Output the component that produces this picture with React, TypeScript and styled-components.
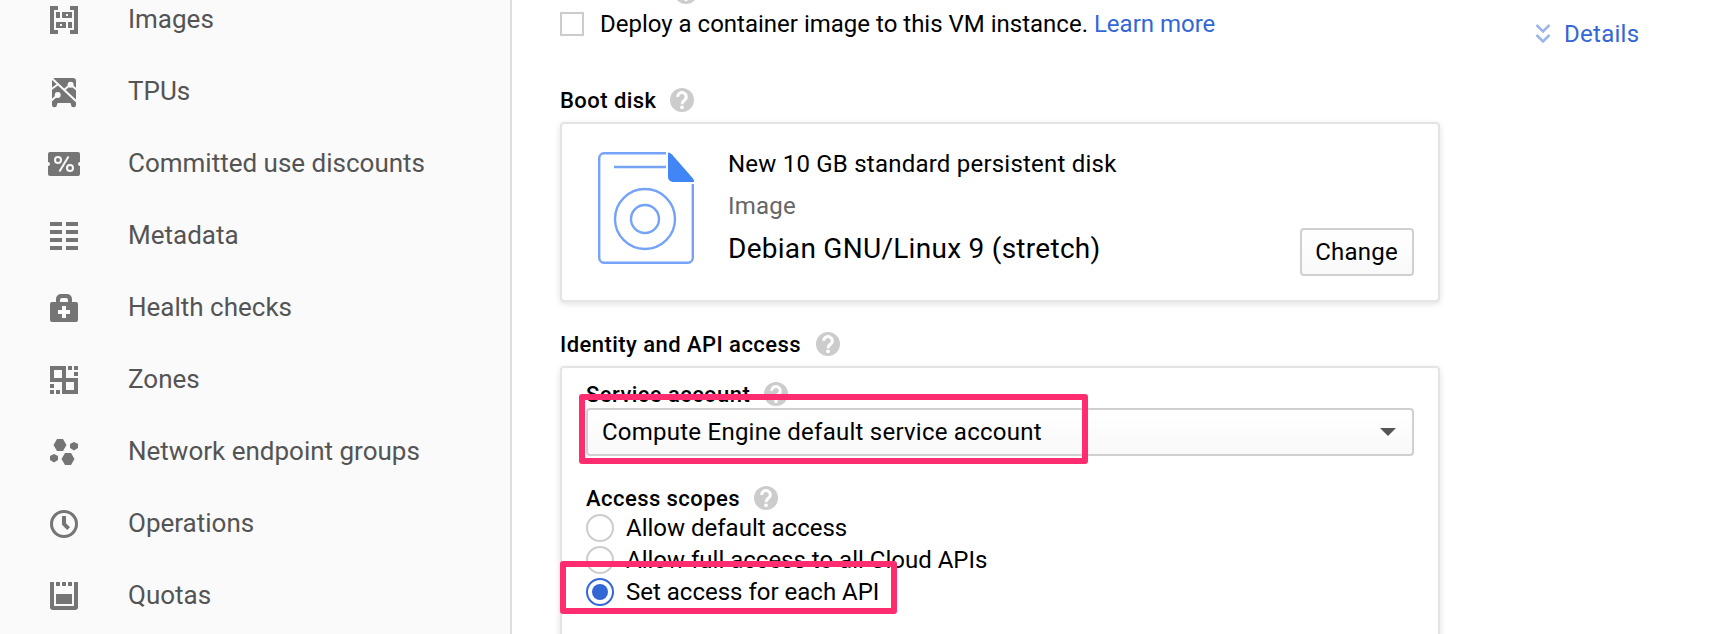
import React from 'react';
import styled, { createGlobalStyle } from 'styled-components';

const Global = createGlobalStyle`
  html, body, #root { margin: 0; padding: 0; height: 634px; overflow: hidden; }
  body { background: #fff; font-family: Roboto, "Liberation Sans", sans-serif; color: #000; }
  *, *::before, *::after { box-sizing: border-box; }
`;

const Page = styled.div`
  display: flex;
  width: 1714px;
  height: 634px;
  overflow: hidden;
`;

const Sidebar = styled.nav`
  flex: none;
  width: 512px;
  height: 634px;
  overflow: hidden;
  background: #fafafa;
  border-right: 2px solid #ddd;
`;

const NavList = styled.ul`
  list-style: none;
  margin: -16px 0 0;
  padding: 0;
`;

const NavItem = styled.li`
  display: flex;
  align-items: center;
  height: 72px;
  padding-left: 48px;
  font-size: 26px;
  line-height: 32px;
  color: #545454;
  svg { flex: none; width: 32px; height: 32px; margin-right: 48px; fill: #757575; }
`;

const NavText = styled.span`
  padding-bottom: 2px;
`;

const Main = styled.main`
  width: 880px;
  margin-left: 48px;
  flex: none;
`;

const LabelRow = styled.div<{ $top?: number }>`
  display: flex;
  align-items: center;
  height: 24px;
  margin-top: ${(p) => p.$top ?? 0}px;
`;

const LabelText = styled.span`
  padding-top: 2px;
  font-size: 22px;
  font-weight: 500;
  line-height: 24px;
  letter-spacing: 0.45px;
  white-space: nowrap;
`;

const HelpSvg = styled.svg<{ $gap: number }>`
  flex: none;
  width: 24px;
  height: 24px;
  margin-left: ${(p) => p.$gap}px;
`;

const CheckRow = styled.label`
  display: flex;
  align-items: center;
  height: 32px;
  margin-top: 4px;
  font-size: 24px;
  white-space: nowrap;
`;

const Checkbox = styled.span`
  width: 24px;
  height: 24px;
  margin-right: 16px;
  border: 2px solid #ccc;
  background: #fff;
`;

const Link = styled.a`
  color: #3367d6;
  text-decoration: none;
`;

const Card = styled.section`
  width: 880px;
  margin-top: 10px;
  border: 2px solid #e4e4e4;
  border-radius: 4px;
  background: #fff;
  box-shadow: 0 2px 6px rgba(0, 0, 0, 0.12);
`;

const DiskCard = styled(Card)`
  display: flex;
  height: 180px;
  padding: 28px 24px 24px 36px;
`;

const DiskSvg = styled.svg`
  flex: none;
  width: 96px;
  height: 112px;
`;

const DiskInfo = styled.div`
  flex: 1;
  margin-left: 34px;
  white-space: nowrap;
`;

const DiskLine = styled.div<{ $size?: number; $color?: string; $height: number; $spacing?: number }>`
  height: ${(p) => p.$height}px;
  line-height: ${(p) => p.$height}px;
  font-size: ${(p) => p.$size ?? 24}px;
  color: ${(p) => p.$color ?? '#000'};
  letter-spacing: ${(p) => p.$spacing ?? 0.22}px;
`;

const Button = styled.button`
  align-self: flex-end;
  width: 114px;
  height: 48px;
  padding: 0 1px 0 0;
  border: 2px solid #d0d0d0;
  border-radius: 4px;
  background: linear-gradient(#fff, #f9f9f9);
  font: 24px/44px Roboto, "Liberation Sans", sans-serif;
  letter-spacing: 0.22px;
  color: #000;
`;

const AccessCard = styled(Card)`
  height: 320px;
  padding: 14px 24px;
`;

const Select = styled.div`
  display: flex;
  align-items: center;
  justify-content: space-between;
  height: 48px;
  margin-top: 2px;
  padding: 0 16px 0 14px;
  border: 2px solid #d0d0d0;
  border-radius: 4px;
  background: linear-gradient(#fff, #f9f9f9);
  font-size: 24px;
  letter-spacing: 0.24px;
  white-space: nowrap;
`;

const RadioGroup = styled.div`
  margin-top: 2px;
`;

const RadioRow = styled.label`
  display: flex;
  align-items: center;
  height: 32px;
  font-size: 24px;
  white-space: nowrap;
`;

const Radio = styled.span<{ $on?: boolean }>`
  display: flex;
  align-items: center;
  justify-content: center;
  width: 28px;
  height: 28px;
  margin-right: 12px;
  border: 2px solid ${(p) => (p.$on ? '#3367d6' : '#ccc')};
  border-radius: 50%;
  background: #fff;
  &::after {
    content: '';
    width: 16px;
    height: 16px;
    border-radius: 50%;
    background: ${(p) => (p.$on ? '#3367d6' : 'transparent')};
  }
`;

const Aside = styled.aside`
  display: flex;
  align-items: center;
  height: 32px;
  margin: 18px 0 0 95px;
  font-size: 24px;
  letter-spacing: 0.28px;
  color: #3367d6;
  svg { width: 16px; height: 20px; margin-right: 13px; }
`;

const Highlight = styled.div<{ $x: number; $y: number; $w: number; $h: number }>`
  position: absolute;
  left: ${(p) => p.$x}px;
  top: ${(p) => p.$y}px;
  width: ${(p) => p.$w}px;
  height: ${(p) => p.$h}px;
  border: 6px solid #ff2d6f;
  border-radius: 3px;
`;

const Help = ({ gap }: { gap: number }) => (
  <HelpSvg $gap={gap} viewBox="0 0 24 24">
    <circle cx="12" cy="12" r="12" fill="#ccc" />
    <path d="M7.700 8.900a4.300 4.200 0 1 1 7.200 2.900C13.200 13.300 12 13.700 12 16.200" fill="none" stroke="#fff" strokeWidth="3" />
    <circle cx="12" cy="19.300" r="1.900" fill="#fff" />
  </HelpSvg>
);

const SectionLabel = ({ text, top, gap = 14 }: { text: string; top?: number; gap?: number }) => (
  <LabelRow $top={top}>
    <LabelText>{text}</LabelText>
    <Help gap={gap} />
  </LabelRow>
);

const icons: Record<string, React.ReactNode> = {
  Images: (
    <path fillRule="evenodd" d="M2 2h8v4H6v20h4v4H2zM30 2h-8v4h4v20h-4v4h8zM8 8h4v6H8zM14 8h10v6H14zM18 10v2h2v-2zM8 18h10v6H8zM12 20v2h2v-2zM20 18h4v6h-4z" />
  ),
  TPUs: (
    <>
      <path d="M7 2h18a3 3 0 0 1 3 3v23.500a2.500 2.500 0 0 1-5 .5c0-1.500-.5-2-1.500-2h-11c-1 0-1.500.5-1.500 2a2.500 2.500 0 0 1-5-.5V5a3 3 0 0 1 3-3z" />
      <path d="M4 2.500l24.500 23M3.500 13l7-5M3.500 24.500l6-5.500M16 14l6.500-5.500M22.700 8.700l5.800 4.800" fill="none" stroke="#fafafa" strokeWidth="2" />
      <circle cx="22.600" cy="8.700" r="3" fill="#fafafa" />
      <circle cx="9.700" cy="19" r="3" fill="#fafafa" />
    </>
  ),
  'Committed use discounts': (
    <>
      <path d="M2 4h28a2 2 0 0 1 2 2v8a2 2 0 0 0 0 4v8a2 2 0 0 1-2 2H2a2 2 0 0 1-2-2v-8a2 2 0 0 0 0-4V6a2 2 0 0 1 2-2z" />
      <g fill="none" stroke="#fafafa" strokeWidth="2"><circle cx="10" cy="12" r="3" /><circle cx="22" cy="20" r="3" /><path d="M20.500 8.500l-9 15" /></g>
    </>
  ),
  Metadata: <path d="M2 2h12v4H2zM18 2h12v4H18zM2 10h12v4H2zM18 10h12v4H18zM2 18h12v4H2zM18 18h12v4H18zM2 26h12v4H2zM18 26h12v4H18z" />,
  'Health checks': (
    <path fillRule="evenodd" d="M8 10V7a5 5 0 0 1 5-5h6a5 5 0 0 1 5 5v3h4a2 2 0 0 1 2 2v16a2 2 0 0 1-2 2H4a2 2 0 0 1-2-2V12a2 2 0 0 1 2-2zM12 10h8V8a2 2 0 0 0-2-2h-4a2 2 0 0 0-2 2zM14 14v4h-4v4h4v4h4v-4h4v-4h-4v-4z" />
  ),
  Zones: (
    <path fillRule="evenodd" d="M2 2h16v12h12v16H14V18H2zM6 6v8h8V6zM18 18v8h8v-8zM20 2h4v4h-4zM26 2h4v4h-4zM26 8h4v4h-4zM2 20h4v4H2zM2 26h4v4H2zM8 26h4v4H8z" />
  ),
  'Network endpoint groups': (
    <path d="M9 3h6l3.500 6L15 15H9L5.500 9zM17 17h6l3.500 6L23 29h-6l-3.500-6zM26 6l4 2v4l-4 2.500-4-2.500V8zM6 18l4 2v4l-4 2.500L2 24v-4z" />
  ),
  Operations: (
    <>
      <circle cx="16" cy="16" r="12.500" fill="none" stroke="#757575" strokeWidth="3" />
      <path d="M14 8h4v7.200l4 4-2.800 2.800L14 16.800z" />
    </>
  ),
  Quotas: (
    <path d="M2 2h4v24h20V2h4v25a3 3 0 0 1-3 3H5a3 3 0 0 1-3-3zM8 2h4v4H8zM14 2h4v4h-4zM20 2h4v4h-4zM8 14h16v10H8z" />
  ),
};

export default function App() {
  return (
    <>
      <Global />
      <Page>
        <Sidebar>
          <NavList>
            {Object.entries(icons).map(([label, icon]) => (
              <NavItem key={label}>
                <svg viewBox="0 0 32 32">{icon}</svg>
                <NavText>{label}</NavText>
              </NavItem>
            ))}
          </NavList>
        </Sidebar>
        <Main>
          <SectionLabel top={-20} text="Container" />
          <CheckRow>
            <Checkbox />
            <span>Deploy a container image to this VM instance. <Link>Learn more</Link></span>
          </CheckRow>
          <SectionLabel top={48} text="Boot disk" gap={13} />
          <DiskCard>
            <DiskSvg viewBox="0 0 96 112" fill="none" stroke="#74a3f8" strokeWidth="2.400">
              <path d="M68 1.200H6a5 5 0 0 0-4.800 5v99.600a5 5 0 0 0 4.800 5h84a5 5 0 0 0 4.800-5V32M16 15h52" />
              <circle cx="47" cy="67" r="30" />
              <circle cx="47" cy="67" r="14" />
              <path d="M70 0.500q2 0 4 2l21 24q1.500 2 1 3.500H75a5 5 0 0 1-5-5z" fill="#4285f4" stroke="none" />
            </DiskSvg>
            <DiskInfo>
              <DiskLine $height={24}>New 10 GB standard persistent disk</DiskLine>
              <DiskLine $height={60} $color="#666">Image</DiskLine>
              <DiskLine $height={26} $size={28} $spacing={0.28}>Debian GNU/Linux 9 (stretch)</DiskLine>
            </DiskInfo>
            <Button>Change</Button>
          </DiskCard>
          <SectionLabel top={30} text="Identity and API access" gap={15} />
          <AccessCard>
            <SectionLabel text="Service account" />
            <Select>
              Compute Engine default service account
              <svg width="16" height="8" viewBox="0 0 16 8"><path d="M0 0h16L8 8z" fill="#555" /></svg>
            </Select>
            <SectionLabel top={30} text="Access scopes" />
            <RadioGroup>
              <RadioRow><Radio />Allow default access</RadioRow>
              <RadioRow><Radio />Allow full access to all Cloud APIs</RadioRow>
              <RadioRow><Radio $on />Set access for each API</RadioRow>
            </RadioGroup>
          </AccessCard>
        </Main>
        <Aside>
          <svg viewBox="0 0 16 20" fill="none" stroke="#9ab4ec" strokeWidth="2.500"><path d="M1.500 1l6.500 6.500L14.500 1M1.500 11l6.500 6.500L14.500 11" /></svg>
          Details
        </Aside>
      </Page>
      <Highlight $x={579} $y={394} $w={509} $h={70} />
      <Highlight $x={560} $y={561} $w={337} $h={53} />
    </>
  );
}
